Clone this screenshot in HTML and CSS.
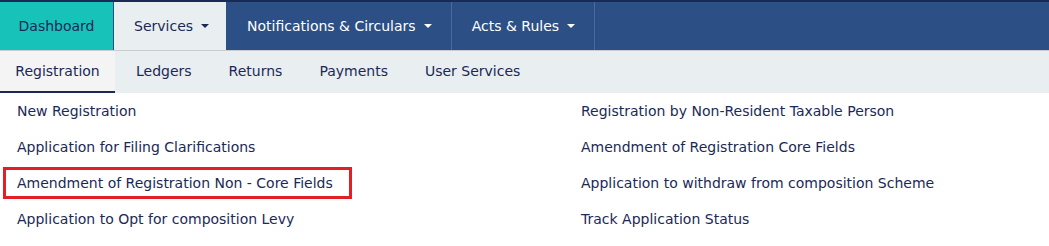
FILE: index.html
```html
<!DOCTYPE html>
<html lang="en">
<head>
  <meta charset="UTF-8" />
  <title>Services - Registration</title>
  <link rel="stylesheet" href="styles.css">
</head>
<body>
  <nav class="topnav">
    <a class="tab dashboard" href="#">Dashboard</a>
    <a class="tab current" href="#">Services <span class="caret"></span></a>
    <a class="tab" href="#">Notifications &amp; Circulars <span class="caret"></span></a>
    <a class="tab" href="#">Acts &amp; Rules <span class="caret"></span></a>
  </nav>

  <div class="subnav">
    <a class="subtab active" href="#">Registration</a>
    <a class="subtab" href="#">Ledgers</a>
    <a class="subtab" href="#">Returns</a>
    <a class="subtab" href="#">Payments</a>
    <a class="subtab" href="#">User Services</a>
  </div>

  <div class="links">
    <ul class="col">
      <li><a href="#">New Registration</a></li>
      <li><a href="#">Application for Filing Clarifications</a></li>
      <li class="marked"><a href="#">Amendment of Registration Non - Core Fields</a></li>
      <li><a href="#">Application to Opt for composition Levy</a></li>
    </ul>
    <ul class="col">
      <li><a href="#">Registration by Non-Resident Taxable Person</a></li>
      <li><a href="#">Amendment of Registration Core Fields</a></li>
      <li><a href="#">Application to withdraw from composition Scheme</a></li>
      <li><a href="#">Track Application Status</a></li>
    </ul>
  </div>
</body>
</html>
```

FILE: styles.css
```css
body {
  margin: 0;
  font-family: "DejaVu Sans", Verdana, sans-serif;
  font-size: 14px;
  background: #fff;
  color: #1b2956;
}
a {
  color: inherit;
  text-decoration: none;
}
.topnav {
  display: flex;
  height: 48px;
  background: #2c4f85;
  border-top: 2px solid #1b2956;
  border-bottom: 1px solid #c9cdd1;
}
.tab {
  display: flex;
  align-items: center;
  padding: 0 19px 0 20px;
  color: #fff;
  border-right: 1px solid #4b6a9c;
}
.tab.dashboard {
  width: 114px;
  box-sizing: border-box;
  justify-content: center;
  padding: 0;
  background: #17c3b9;
  color: #1b2956;
  border-right: 1px solid #2c4f85;
}
.tab.current {
  width: 113px;
  box-sizing: border-box;
  background: #e9eef1;
  color: #1b2956;
  border-right: 1px solid #2c4f85;
}
.caret {
  display: inline-block;
  margin-left: 8px;
  border-top: 4px solid currentColor;
  border-left: 4px solid transparent;
  border-right: 4px solid transparent;
}
.subnav {
  display: flex;
  height: 42px;
  background: #e9eef1;
}
.subtab {
  display: flex;
  align-items: center;
  padding: 0 16px 0 21px;
  border-bottom: 2px solid transparent;
}
.subtab.active {
  width: 115px;
  box-sizing: border-box;
  justify-content: center;
  padding: 0;
  background: #f4f4f4;
  border-bottom-color: #1b2956;
}
.links {
  display: grid;
  grid-template-columns: 564px 1fr;
  padding: 2px 0 0 3px;
}
.col {
  list-style: none;
  margin: 0;
  padding: 0;
}
.col li {
  width: fit-content;
  height: 26px;
  line-height: 26px;
  padding: 0 16px 0 11px;
  margin-bottom: 4px;
  border: 3px solid transparent;
}
.col li.marked {
  border-color: #e31e24;
}
```
